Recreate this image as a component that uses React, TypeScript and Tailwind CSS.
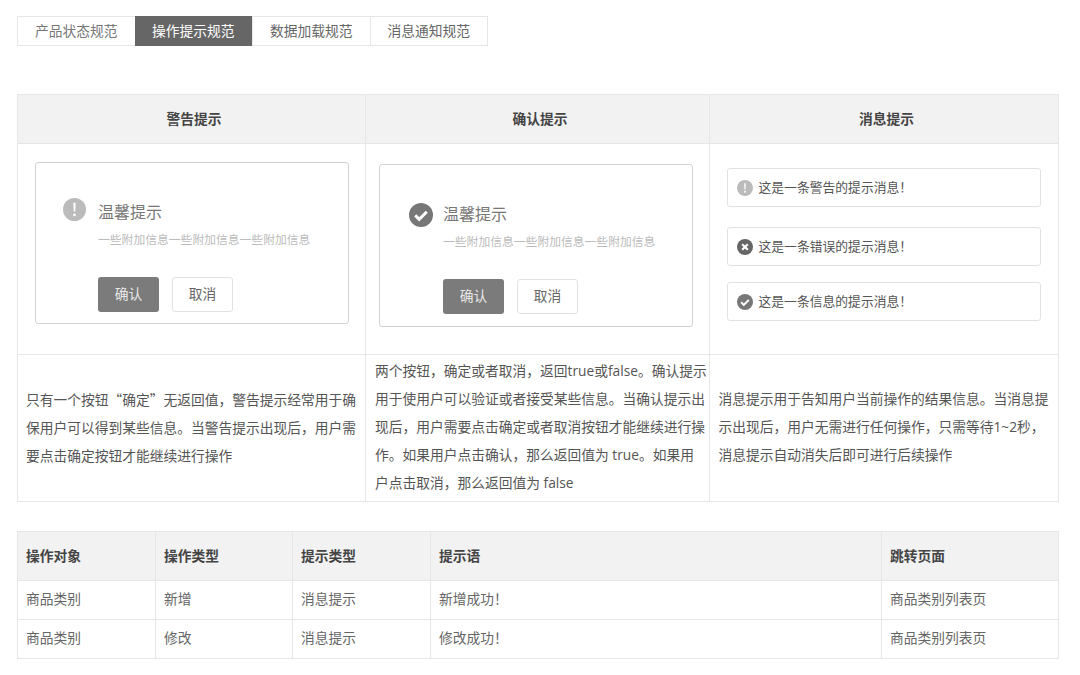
const tabs = ["产品状态规范", "操作提示规范", "数据加载规范", "消息通知规范"];

const rows = [
  ["商品类别", "新增", "消息提示", "新增成功！", "商品类别列表页"],
  ["商品类别", "修改", "消息提示", "修改成功！", "商品类别列表页"],
];

const WarnIcon = ({ className }: { className: string }) => (
  <svg viewBox="0 0 24 24" className={className}>
    <circle cx="12" cy="12" r="12" fill="#bbbbbb" />
    <path d="M10.8 5h2.4l-.4 9.2h-1.6z" fill="#ffffff" />
    <circle cx="12" cy="17.6" r="1.5" fill="#ffffff" />
  </svg>
);

const CheckIcon = ({ className }: { className: string }) => (
  <svg viewBox="0 0 24 24" className={className}>
    <circle cx="12" cy="12" r="12" fill="#777777" />
    <path d="M6.2 12.4l4 4 7.6-7.6" fill="none" stroke="#ffffff" strokeWidth="3" />
  </svg>
);

const ErrorIcon = ({ className }: { className: string }) => (
  <svg viewBox="0 0 24 24" className={className}>
    <circle cx="12" cy="12" r="12" fill="#666666" />
    <path d="M7.8 7.8l8.4 8.4M16.2 7.8l-8.4 8.4" fill="none" stroke="#ffffff" strokeWidth="3.2" />
  </svg>
);

const Dialog = ({ icon, className }: { icon: React.ReactNode; className: string }) => (
  <div className={`w-[314px] rounded-[3px] border border-[#d2d2d2] bg-white ${className}`}>
    <div className="flex">
      {icon}
      <div>
        <div className="text-[16px] leading-[24px] text-[#777]">温馨提示</div>
        <div className="mt-[7px] text-[11.8px] leading-[16px] text-[#bbb] whitespace-nowrap">
          一些附加信息一些附加信息一些附加信息
        </div>
        <div className="mt-[30px] flex gap-[13px]">
          <div className="flex h-[35px] w-[61px] items-center justify-center rounded-[3px] bg-[#7b7b7b] text-[13.75px] text-[#e8e8e8]">
            确认
          </div>
          <div className="flex h-[35px] w-[61px] items-center justify-center rounded-[3px] border border-[#e2e2e2] bg-white text-[13.75px] text-[#666]">
            取消
          </div>
        </div>
      </div>
    </div>
  </div>
);

const Alert = ({ icon, text, className }: { icon: React.ReactNode; text: string; className: string }) => (
  <div
    className={`flex w-[314px] items-center gap-[6px] rounded-[3px] border border-[#e2e2e2] bg-white pl-[8.5px] text-[12.8px] text-[#555] ${className}`}
  >
    {icon}
    <span className="mt-px">{text}</span>
  </div>
);

export default function App() {
  return (
    <div
      lang="zh-CN"
      className="h-[675px] w-[1080px] overflow-hidden bg-white pl-[17px] pt-[16px] text-[13.75px] text-[#555] font-['Open_Sans','Noto_Sans_CJK_SC',sans-serif]"
    >
      <div className="flex h-[30px] w-fit border border-[#e6e6e6]">
        {tabs.map((tab, index) => (
          <div
            key={tab}
            className={`flex items-center justify-center ${
              index === 0
                ? "w-[116.5px] text-[#777]"
                : index === 1
                  ? "-my-px h-[30px] w-[117.5px] bg-[#666] text-white"
                  : "w-[117.5px] border-l border-[#e6e6e6] text-[#666]"
            }`}
          >
            {tab}
          </div>
        ))}
      </div>

      <table className="mt-[48px] w-[1041px] table-fixed border-collapse">
        <colgroup>
          <col className="w-[348px]" />
          <col className="w-[344px]" />
          <col className="w-[349px]" />
        </colgroup>
        <thead>
          <tr className="h-[49px] bg-[#f2f2f2] text-[#444]">
            <th className="border border-[#e6e6e6] pl-[5px] font-bold">警告提示</th>
            <th className="border border-[#e6e6e6] pl-[5px] font-bold">确认提示</th>
            <th className="border border-[#e6e6e6] pl-[5px] font-bold">消息提示</th>
          </tr>
        </thead>
        <tbody>
          <tr className="h-[211px]">
            <td className="border border-[#e6e6e6] pl-[17px] align-top">
              <Dialog
                className="mt-[18px] h-[162px] pl-[27px] pt-[37px]"
                icon={<WarnIcon className="-mt-[2px] mr-[12px] h-[23px] w-[23px] shrink-0" />}
              />
            </td>
            <td className="border border-[#e6e6e6] pl-[13px] align-top">
              <Dialog
                className="mt-[20px] h-[163px] pl-[29px] pt-[37px]"
                icon={<CheckIcon className="mr-[10px] mt-[1px] h-[24px] w-[24px] shrink-0" />}
              />
            </td>
            <td className="border border-[#e6e6e6] pl-[17px] align-top">
              <Alert className="mt-[24px] h-[39px]" icon={<WarnIcon className="h-[16px] w-[16px]" />} text="这是一条警告的提示消息！" />
              <Alert className="mt-[20px] h-[39px]" icon={<ErrorIcon className="h-[16px] w-[16px]" />} text="这是一条错误的提示消息！" />
              <Alert className="mt-[16px] h-[39px]" icon={<CheckIcon className="h-[16px] w-[16px]" />} text="这是一条信息的提示消息！" />
            </td>
          </tr>
          <tr className="h-[147px] leading-[28px] whitespace-nowrap">
            <td className="border border-[#e6e6e6] pb-[2px] pl-[8px]">
              只有一个按钮<span className="font-['Noto_Sans_CJK_SC']">“确定”</span>无返回值，警告提示经常用于确
              <br />
              保用户可以得到某些信息。当警告提示出现后，用户需
              <br />
              要点击确定按钮才能继续进行操作
            </td>
            <td className="border border-[#e6e6e6] pb-[2px] pl-[9px]">
              两个按钮，确定或者取消，返回true或false。确认提示
              <br />
              用于使用户可以验证或者接受某些信息。当确认提示出
              <br />
              现后，用户需要点击确定或者取消按钮才能继续进行操
              <br />
              作。如果用户点击确认，那么返回值为 true。如果用
              <br />
              户点击取消，那么返回值为 false
            </td>
            <td className="border border-[#e6e6e6] pb-[2px] pl-[8.5px]">
              消息提示用于告知用户当前操作的结果信息。当消息提
              <br />
              示出现后，用户无需进行任何操作，只需等待1~2秒，
              <br />
              消息提示自动消失后即可进行后续操作
            </td>
          </tr>
        </tbody>
      </table>

      <table className="mt-[29px] w-[1041px] table-fixed border-collapse">
        <colgroup>
          <col className="w-[138px]" />
          <col className="w-[137px]" />
          <col className="w-[138px]" />
          <col className="w-[451px]" />
          <col className="w-[177px]" />
        </colgroup>
        <thead>
          <tr className="h-[49px] bg-[#f2f2f2] text-left text-[#444]">
            {["操作对象", "操作类型", "提示类型", "提示语", "跳转页面"].map((title) => (
              <th key={title} className="border border-[#e6e6e6] pl-[8px] font-bold">
                {title}
              </th>
            ))}
          </tr>
        </thead>
        <tbody>
          {rows.map((row, rowIndex) => (
            <tr key={rowIndex} className="h-[39px] text-[#666]">
              {row.map((cell, cellIndex) => (
                <td key={cellIndex} className="border border-[#e6e6e6] pb-[1px] pl-[8px]">
                  {cell}
                </td>
              ))}
            </tr>
          ))}
        </tbody>
      </table>
    </div>
  );
}
